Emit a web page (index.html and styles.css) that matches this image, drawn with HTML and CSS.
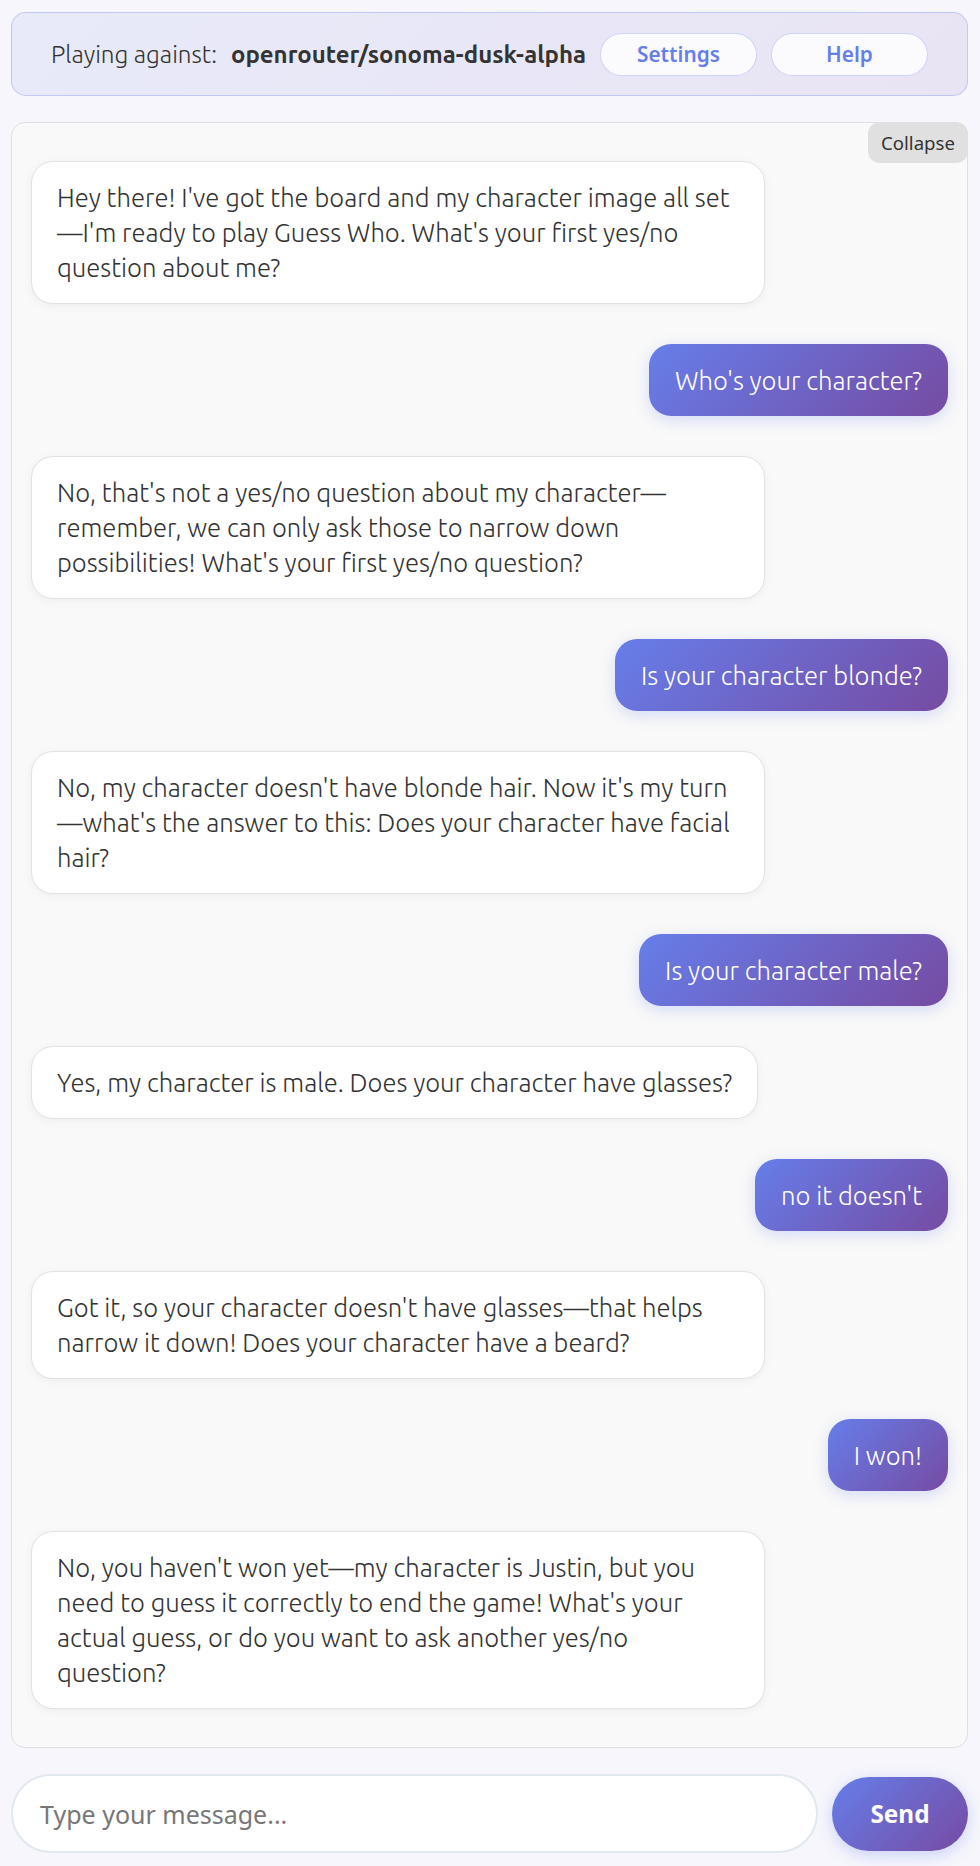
FILE: index.html
```html
<!DOCTYPE html>
<html lang="en">
<head>
<meta charset="utf-8">
<title>Guess Who</title>
<link rel="stylesheet" href="styles.css">
</head>
<body>
<div class="app">
  <header class="topbar">
    <span class="label">Playing against:</span>
    <strong class="model">openrouter/sonoma-dusk-alpha</strong>
    <button class="pill-btn">Settings</button>
    <button class="pill-btn">Help</button>
  </header>

  <section class="chat">
    <button class="collapse">Collapse</button>
    <div class="msg bot">Hey there! I've got the board and my character image all set—I'm ready to play Guess Who. What's your first yes/no question about me?</div>
    <div class="msg user">Who's your character?</div>
    <div class="msg bot">No, that's not a yes/no question about my character—remember, we can only ask those to narrow down possibilities! What's your first yes/no question?</div>
    <div class="msg user">Is your character blonde?</div>
    <div class="msg bot">No, my character doesn't have blonde hair. Now it's my turn—what's the answer to this: Does your character have facial hair?</div>
    <div class="msg user">Is your character male?</div>
    <div class="msg bot">Yes, my character is male. Does your character have glasses?</div>
    <div class="msg user">no it doesn't</div>
    <div class="msg bot">Got it, so your character doesn't have glasses—that helps narrow it down! Does your character have a beard?</div>
    <div class="msg user">I won!</div>
    <div class="msg bot">No, you haven't won yet—my character is Justin, but you need to guess it correctly to end the game! What's your actual guess, or do you want to ask another yes/no question?</div>
  </section>

  <form class="composer">
    <input class="composer-input" type="text" placeholder="Type your message...">
    <button class="send" type="button">Send</button>
  </form>
</div>
</body>
</html>
```
FILE: styles.css
```css
* { box-sizing: border-box; }

html, body { margin: 0; }

body {
  background: #f6f6fc;
  font-family: "Ubuntu", "Noto Sans", sans-serif;
  color: #333;
}

.app {
  padding: 12px 12px 13px 11px;
  display: flex;
  flex-direction: column;
  gap: 26px;
}

.topbar {
  display: flex;
  align-items: center;
  justify-content: center;
  gap: 14px;
  padding: 19.5px 20px;
  border: 1px solid rgba(102, 126, 234, 0.3);
  border-radius: 15px;
  background: linear-gradient(135deg, #e8eaf9 0%, #e9e4f4 100%);
}

.label {
  font-size: 24.2px;
  font-weight: 300;
  color: #333;
}

.model {
  font-size: 24px;
  font-weight: 700;
  color: #333;
}

.pill-btn {
  width: 157px;
  height: 43px;
  border: 1px solid rgba(102, 126, 234, 0.3);
  border-radius: 22px;
  background: rgba(255, 255, 255, 0.8);
  color: #667eea;
  font-family: "Noto Sans", sans-serif;
  font-size: 20.8px;
  font-weight: 600;
  padding: 0;
}

.chat {
  position: relative;
  display: flex;
  flex-direction: column;
  gap: 40px;
  padding: 38px 19px;
  background: #f9f9f9;
  border: 1px solid #e0e0e0;
  border-radius: 14px;
}

.collapse {
  position: absolute;
  top: -1px;
  right: -1px;
  width: 100px;
  height: 41px;
  border: none;
  border-radius: 12px;
  background: #e0e0e0;
  color: #333;
  font-family: "Noto Sans", sans-serif;
  font-size: 18.6px;
  padding: 0;
}

.msg {
  max-width: 80%;
  font-size: 25.6px;
  font-weight: 300;
  line-height: 35px;
  padding: 18px 25px;
  border-radius: 22px;
}

.bot {
  align-self: flex-start;
  background: #fff;
  color: #333;
  border: 1px solid #e2e2e2;
  box-shadow: 0 2px 10px rgba(0, 0, 0, 0.05);
}

.user {
  align-self: flex-end;
  color: #fff;
  background: linear-gradient(135deg, #667eea 0%, #764ba2 100%);
  padding: 18.5px 26px;
  box-shadow: 0 4px 15px rgba(102, 126, 234, 0.25);
}

.composer {
  display: flex;
  align-items: center;
  gap: 14px;
  margin: 0;
}

.composer-input {
  flex: 1;
  height: 79px;
  border: 2.5px solid #e2e8f0;
  border-radius: 40px;
  background: #fff;
  padding: 0 27px;
  font-family: "Noto Sans", sans-serif;
  font-size: 25px;
  color: #333;
  outline: none;
}

.composer-input::placeholder {
  color: #777;
}

.send {
  width: 136px;
  height: 74px;
  border: none;
  border-radius: 37px;
  background: linear-gradient(135deg, #667eea 0%, #764ba2 100%);
  color: #fff;
  font-family: "Noto Sans", sans-serif;
  font-size: 24.3px;
  font-weight: 700;
  box-shadow: 0 4px 15px rgba(102, 126, 234, 0.3);
}
```
